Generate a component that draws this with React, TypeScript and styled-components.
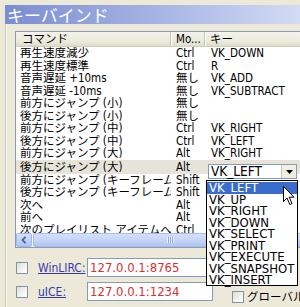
import React, { ReactElement } from 'react';
import styled, { createGlobalStyle } from 'styled-components';

const UI_FONT = `"Liberation Sans Narrow", "DejaVu Sans Condensed", "Noto Sans CJK JP", sans-serif`;
const JP_FONT = `"Noto Sans CJK JP", sans-serif`;

const GlobalStyle = createGlobalStyle`
  html, body {
    margin: 0;
    padding: 0;
    background: #ece9d8;
  }
`;

const Root = styled.div`
  position: relative;
  width: 300px;
  height: 307px;
  overflow: hidden;
  padding-top: 5px;
  box-sizing: border-box;
  background: #ece9d8;
  font-family: ${UI_FONT};
  color: #000;
`;

const GroupHeader = styled.div`
  margin-left: 5px;
  height: 19px;
  background: linear-gradient(to right, #7a8dd1 0%, #a4b3e3 50%, #d2dbf4 100%);
  color: #fff;
  font-family: ${JP_FONT};
  font-size: 17px;
  line-height: 19px;
  padding-left: 2px;
  white-space: nowrap;
`;

const GroupBody = styled.div`
  margin-left: 5px;
  border-left: 1px solid #c8c6b8;
  box-shadow: inset 1px 0 #fbfaf5;
  padding: 7px 0 0 9px;
  height: 283px;
  box-sizing: border-box;
`;

const ListView = styled.div`
  width: 320px;
  border: 1px solid #8a9bb8;
  background: #fff;
  display: flex;
  flex-direction: column;
`;

const HeaderRow = styled.div`
  display: flex;
  height: 15px;
  background: linear-gradient(to bottom, #f4f3ec 0%, #ebeadb 70%, #dedbc8 100%);
  border-bottom: 1px solid #d4d0bd;
  box-sizing: border-box;
`;

const HeaderCell = styled.div<{ $w?: number; $pad: number }>`
  ${(p) => (p.$w ? `width: ${p.$w}px;` : 'flex: 1;')}
  padding-left: ${(p) => p.$pad}px;
  box-sizing: border-box;
  border-right: 1px solid #c7c5b2;
  box-shadow: 1px 0 #fff;
  font-size: 11.5px;
  line-height: 15px;
  white-space: nowrap;
  overflow: hidden;
`;

const Rows = styled.div`
  height: 186px;
  overflow: hidden;
`;

const Row = styled.div<{ $selected?: boolean }>`
  display: flex;
  align-items: center;
  height: ${(p) => (p.$selected ? 14 : 12.5)}px;
  background: ${(p) => (p.$selected ? '#e6e4d8' : 'transparent')};
  font-size: 11.5px;
  line-height: 12px;
  white-space: nowrap;
`;

const Cell = styled.div<{ $w?: number; $pad: number }>`
  ${(p) => (p.$w ? `width: ${p.$w}px;` : 'flex: 1;')}
  padding-left: ${(p) => p.$pad}px;
  box-sizing: border-box;
  overflow-x: clip;
  overflow-y: visible;
  align-self: stretch;
  display: flex;
  align-items: center;
`;

const Combo = styled.div`
  display: flex;
  align-items: center;
  align-self: flex-start;
  width: 89px;
  height: 15px;
  margin-top: 4.5px;
  border: 1px solid #7f9db9;
  background: #fff;
  box-sizing: border-box;
  font-size: 13.5px;
  line-height: 13px;
`;

const ComboText = styled.span`
  flex: 1;
  padding-left: 2px;
`;

const ComboButton = styled.div`
  width: 14px;
  height: 13px;
  background: #f1efe4;
  border-left: 1px solid #c8c6b6;
  display: flex;
  align-items: center;
  justify-content: center;
`;

const ScrollBar = styled.div`
  display: flex;
  height: 14px;
  background: #f4f3ee;
`;

const ScrollArrow = styled.div`
  width: 16px;
  background: linear-gradient(to bottom, #d3e0fc 0%, #bccff8 60%, #aec4f3 100%);
  border: 1px solid #a2b7e8;
  border-radius: 2px;
  box-sizing: border-box;
  display: flex;
  align-items: center;
  justify-content: center;
`;

const ScrollThumb = styled.div`
  flex: 1;
  margin-left: 1px;
  background: linear-gradient(to bottom, #d4e0fb 0%, #c3d3f9 55%, #b3c6f1 100%);
  border: 1px solid #aabce9;
  border-radius: 2px;
  box-sizing: border-box;
  display: flex;
  align-items: center;
  padding-left: 133px;
`;

const Grip = styled.div`
  width: 7px;
  height: 6px;
  background: repeating-linear-gradient(
    to right,
    #eef3ff 0px,
    #eef3ff 1px,
    #8ea6df 1px,
    #8ea6df 2px
  );
`;

const Options = styled.div`
  display: flex;
  flex-direction: column;
  gap: 5px;
  padding-top: 10px;
`;

const OptionRow = styled.div`
  display: flex;
  align-items: center;
  height: 19px;
`;

const CheckBox = styled.div<{ $drop?: number; $gap?: number }>`
  width: 12px;
  height: 12px;
  margin-left: ${(p) => p.$gap ?? 1}px;
  margin-top: ${(p) => p.$drop ?? 0}px;
  border: 1px solid #8592a8;
  background: linear-gradient(135deg, #dedcd2 0%, #f4f3ee 60%, #ffffff 100%);
  box-sizing: border-box;
  flex-shrink: 0;
`;

const LinkLabel = styled.span`
  width: 59px;
  padding-left: 10px;
  box-sizing: border-box;
  color: #3a3aa8;
  text-decoration: underline;
  font-size: 12px;
  line-height: 14px;
  flex-shrink: 0;
`;

const TextInput = styled.div`
  width: 126px;
  height: 19px;
  border: 1px solid #7f9db9;
  background: #fff;
  box-sizing: border-box;
  color: #d23232;
  font-size: 13px;
  line-height: 17px;
  padding-left: 2px;
  flex-shrink: 0;
`;

const PlainLabel = styled.span`
  padding-left: 3px;
  font-family: ${JP_FONT};
  font-size: 11.5px;
  line-height: 12px;
  margin-top: 8px;
  white-space: nowrap;
`;

const DropList = styled.div`
  position: absolute;
  left: 206px;
  top: 180px;
  width: 92px;
  height: 106px;
  border: 1px solid #000;
  background: #fff;
  box-sizing: border-box;
  padding-top: 1px;
`;

const DropItem = styled.div<{ $active?: boolean }>`
  height: 11.5px;
  line-height: 11.5px;
  padding-left: 2px;
  font-size: 13px;
  white-space: nowrap;
  background: ${(p) => (p.$active ? '#3a6dcb' : 'transparent')};
  color: ${(p) => (p.$active ? '#fff' : '#000')};
`;

const Cursor = styled.svg`
  position: absolute;
  left: 283px;
  top: 186px;
`;

const bindings: [string, string, string][] = [
  ['再生速度減少', 'Ctrl', 'VK_DOWN'],
  ['再生速度標準', 'Ctrl', 'R'],
  ['音声遅延 +10ms', '無し', 'VK_ADD'],
  ['音声遅延 -10ms', '無し', 'VK_SUBTRACT'],
  ['前方にジャンプ (小)', '無し', ''],
  ['後方にジャンプ (小)', '無し', ''],
  ['前方にジャンプ (中)', 'Ctrl', 'VK_RIGHT'],
  ['後方にジャンプ (中)', 'Ctrl', 'VK_LEFT'],
  ['前方にジャンプ (大)', 'Alt', 'VK_RIGHT'],
  ['後方にジャンプ (大)', 'Alt', 'VK_LEFT'],
  ['前方にジャンプ (キーフレーム)', 'Shift', ''],
  ['後方にジャンプ (キーフレーム)', 'Shift', ''],
  ['次へ', 'Alt', ''],
  ['前へ', 'Alt', ''],
  ['次のプレイリスト アイテムへ', 'Ctrl', ''],
];

const SELECTED = 9;

const keyChoices = [
  'VK_LEFT',
  'VK_UP',
  'VK_RIGHT',
  'VK_DOWN',
  'VK_SELECT',
  'VK_PRINT',
  'VK_EXECUTE',
  'VK_SNAPSHOT',
  'VK_INSERT',
];

export default function App(): ReactElement {
  return (
    <Root>
      <GlobalStyle />
      <GroupHeader>キーバインド</GroupHeader>
      <GroupBody>
        <ListView>
          <HeaderRow>
            <HeaderCell $w={155} $pad={6}>
              コマンド
            </HeaderCell>
            <HeaderCell $w={34} $pad={5}>
              Mo...
            </HeaderCell>
            <HeaderCell $pad={5}>キー</HeaderCell>
          </HeaderRow>
          <Rows>
            {bindings.map(([command, mod, key], i) => (
              <Row key={command} $selected={i === SELECTED}>
                <Cell $w={155} $pad={4}>
                  {command}
                </Cell>
                <Cell $w={34} $pad={5}>
                  {mod}
                </Cell>
                {i === SELECTED ? (
                  <Cell $pad={3}>
                    <Combo>
                      <ComboText>{key}</ComboText>
                      <ComboButton>
                        <svg width="7" height="4" viewBox="0 0 7 4">
                          <path d="M0 0h7L3.5 4z" fill="#000" />
                        </svg>
                      </ComboButton>
                    </Combo>
                  </Cell>
                ) : (
                  <Cell $pad={6}>{key}</Cell>
                )}
              </Row>
            ))}
          </Rows>
          <ScrollBar>
            <ScrollArrow>
              <svg width="6" height="8" viewBox="0 0 6 8">
                <path
                  d="M4.5 0.8L1.5 4l3 3.2"
                  fill="none"
                  stroke="#4d6185"
                  strokeWidth="1.8"
                />
              </svg>
            </ScrollArrow>
            <ScrollThumb>
              <Grip />
            </ScrollThumb>
          </ScrollBar>
        </ListView>
        <Options>
          <OptionRow>
            <CheckBox />
            <LinkLabel>WinLIRC:</LinkLabel>
            <TextInput>127.0.0.1:8765</TextInput>
          </OptionRow>
          <OptionRow>
            <CheckBox />
            <LinkLabel>uICE:</LinkLabel>
            <TextInput>127.0.0.1:1234</TextInput>
            <CheckBox $drop={10} $gap={19} />
            <PlainLabel>グローバル</PlainLabel>
          </OptionRow>
        </Options>
      </GroupBody>
      <DropList>
        {keyChoices.map((k, i) => (
          <DropItem key={k} $active={i === 0}>
            {k}
          </DropItem>
        ))}
      </DropList>
      <Cursor width="12" height="20" viewBox="0 0 12 20">
        <path
          d="M0.5 0.5L0.5 15.5L4 12L6.8 18.5L9 17.5L6.2 11.2L11 11.2Z"
          fill="#fff"
          stroke="#000"
          strokeWidth="1"
        />
      </Cursor>
    </Root>
  );
}
